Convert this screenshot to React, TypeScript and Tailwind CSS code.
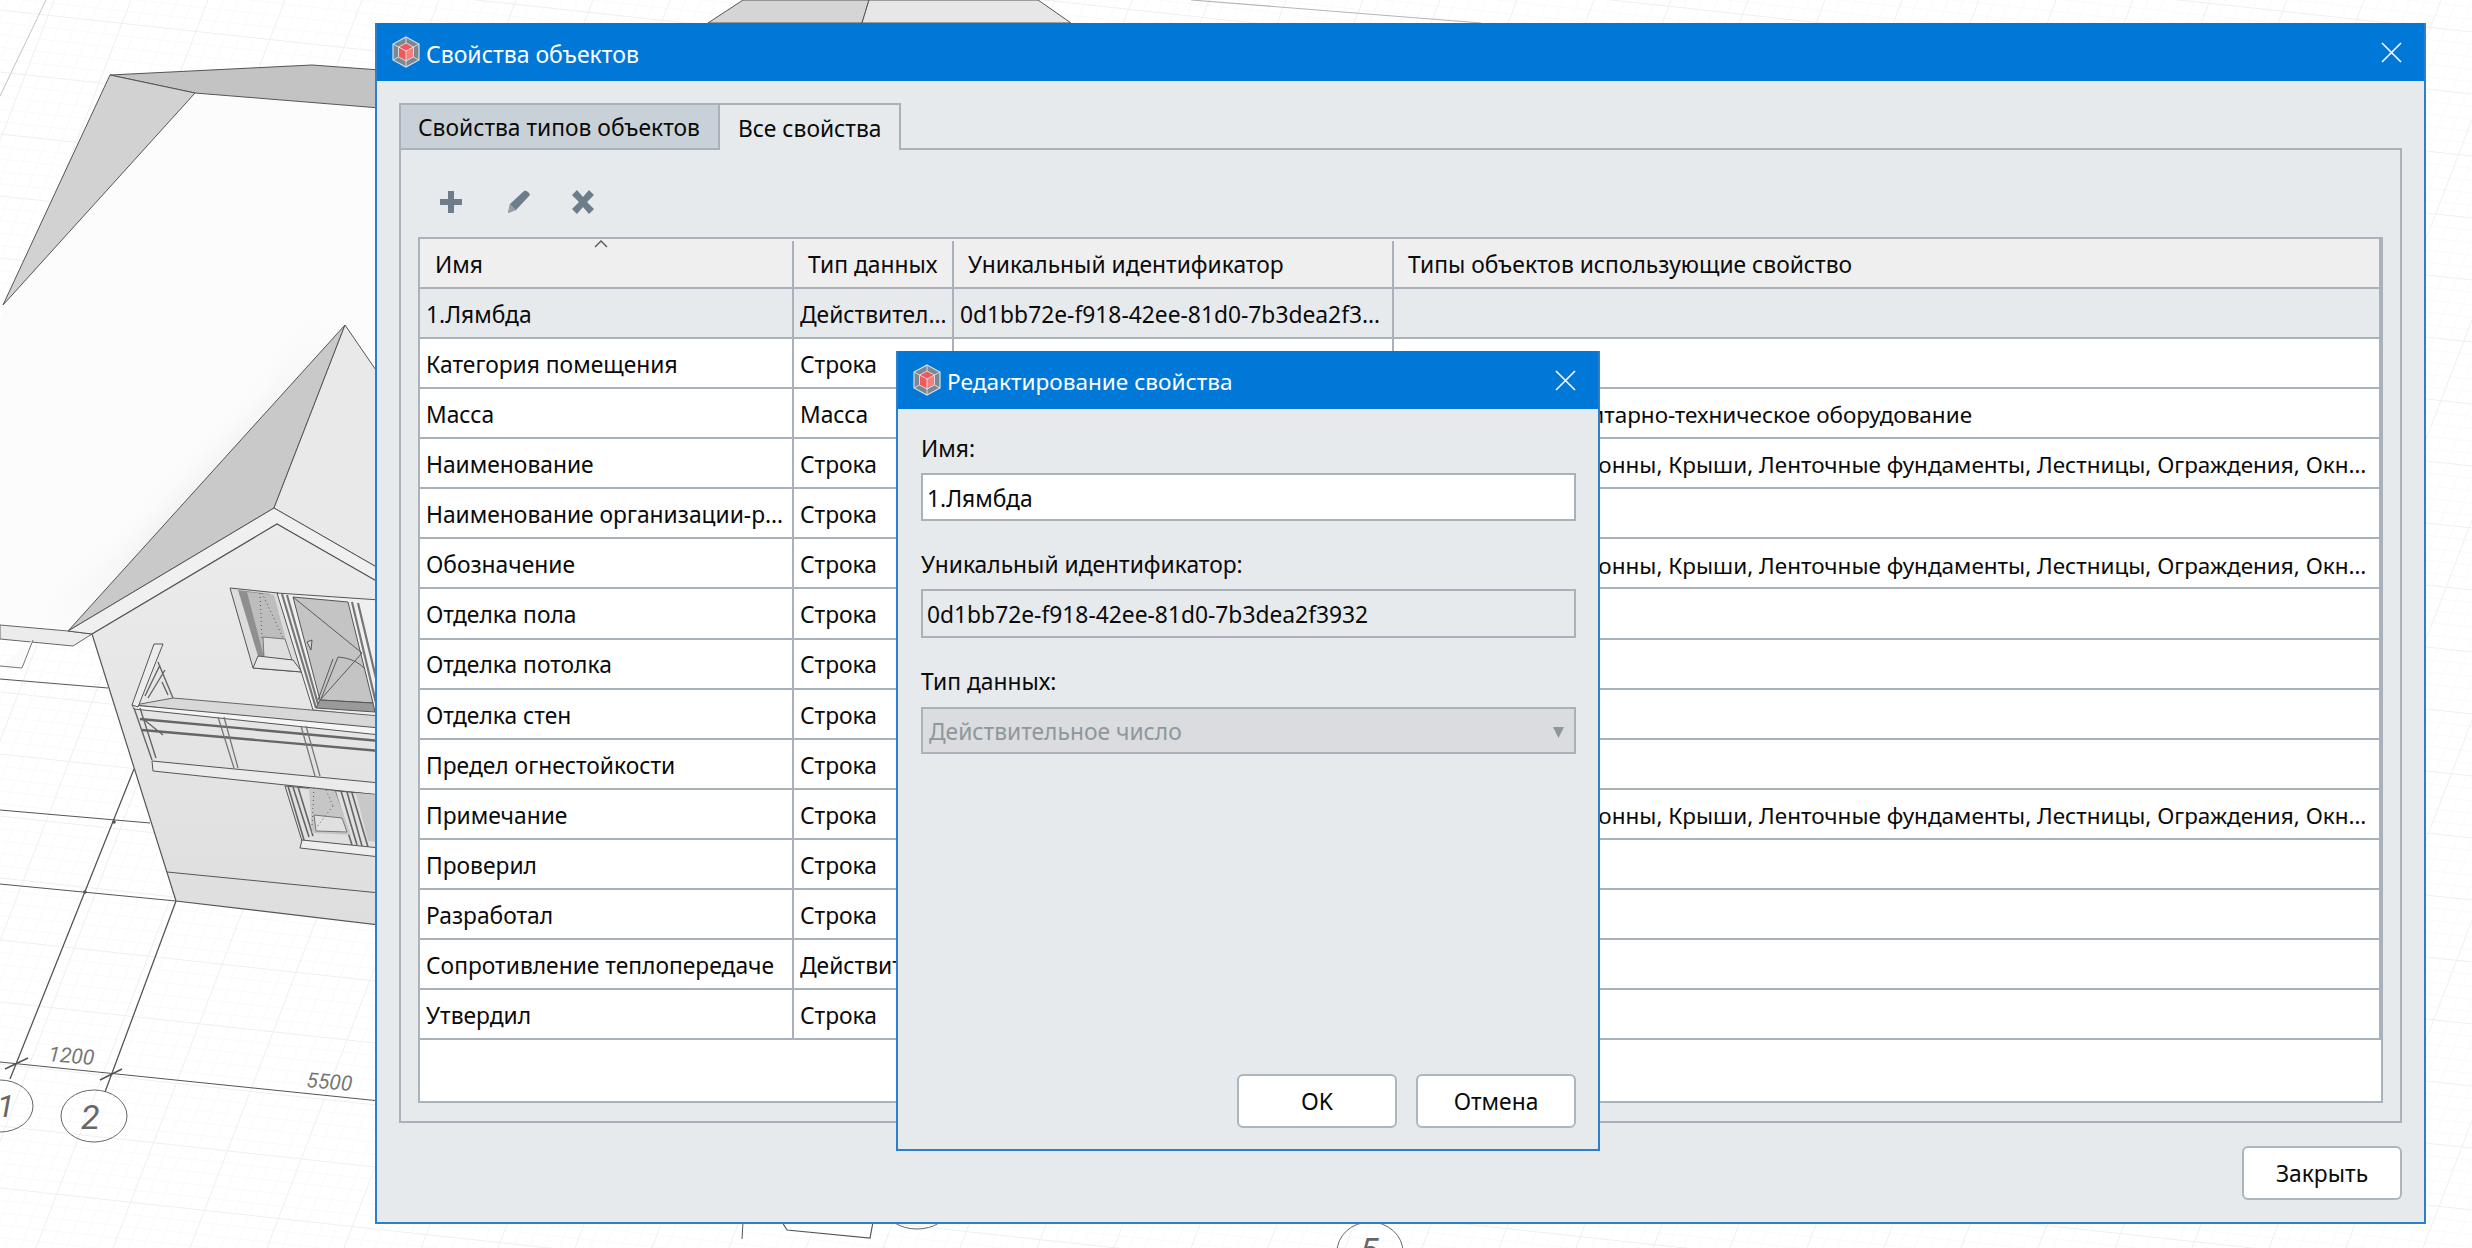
import type { FC } from "react";

type Row = { name: string; type: string; id?: string; objects?: string };

const allObjects =
	"Стены, Балки, Колонны, Крыши, Ленточные фундаменты, Лестницы, Ограждения, Окна, Двери";

const rows: Array<Row> = [
	{ name: "1.Лямбда", type: "Действительное число", id: "0d1bb72e-f918-42ee-81d0-7b3dea2f3932" },
	{ name: "Категория помещения", type: "Строка" },
	{ name: "Масса", type: "Масса", objects: "Ограждения, Санитарно-техническое оборудование" },
	{ name: "Наименование", type: "Строка", objects: allObjects },
	{ name: "Наименование организации-разработчика", type: "Строка" },
	{ name: "Обозначение", type: "Строка", objects: allObjects },
	{ name: "Отделка пола", type: "Строка" },
	{ name: "Отделка потолка", type: "Строка" },
	{ name: "Отделка стен", type: "Строка" },
	{ name: "Предел огнестойкости", type: "Строка" },
	{ name: "Примечание", type: "Строка", objects: allObjects },
	{ name: "Проверил", type: "Строка" },
	{ name: "Разработал", type: "Строка" },
	{ name: "Сопротивление теплопередаче", type: "Действительное число" },
	{ name: "Утвердил", type: "Строка" },
];

const Logo: FC = () => (
	<svg width="30" height="32" viewBox="0 0 30 32" className="shrink-0">
		<polygon points="15,1 28,8 28,24 15,31 2,24 2,8" fill="#7a8794" stroke="#d8dee3" strokeWidth="1.2" />
		<polygon points="15,7 22.5,11 22.5,21 15,25 7.5,21 7.5,11" fill="#ec5a5c" />
		<polygon points="15,15 22.5,11 22.5,21 15,25" fill="#f27f7e" />
		<path d="M15 15 L7.5 11 M15 15 L22.5 11 M15 15 V25 M15 7 L22.5 11 V21 L15 25 L7.5 21 V11 Z M15 1 V7 M2 8 L7.5 11 M28 8 L22.5 11 M2 24 L7.5 21 M28 24 L22.5 21 M15 25 V31" stroke="#dfe4e8" strokeWidth="0.9" fill="none" />
	</svg>
);

const CloseIcon: FC = () => (
	<svg width="21" height="21" viewBox="0 0 21 21">
		<path d="M1 1 L20 20 M20 1 L1 20" stroke="#ffffff" strokeWidth="1.6" fill="none" />
	</svg>
);

const DialogHeader: FC<{ title: string; size: string }> = ({ title, size }) => (
	<div className="flex h-[58px] shrink-0 items-center bg-[#0078d7] pl-[14px] pr-[22px] text-white">
		<Logo />
		<div className={`ml-[5px] flex-1 pt-[3px] leading-[30px] ${size}`}>{title}</div>
		<CloseIcon />
	</div>
);

const DialogButton: FC<{ label: string }> = ({ label }) => (
	<button className="h-[54px] w-[160px] rounded-[6px] border-2 border-[#adb5bd] bg-white pt-[2px] text-[22.8px] text-[#0a0a0a]">
		{label}
	</button>
);

const Background: FC = () => {
	const rowLines = Array.from({ length: 130 }, (_, i) => i);
	const colLines = Array.from({ length: 240 }, (_, i) => i);
	return (
		<svg className="absolute inset-0" width="2472" height="1248" viewBox="0 0 2472 1248">
			<defs>
				<filter id="soft" x="-20%" y="-20%" width="140%" height="140%">
					<feGaussianBlur stdDeviation="14" />
				</filter>
				<linearGradient id="wall" x1="0" y1="0" x2="0" y2="1">
					<stop offset="0" stopColor="#ececec" />
					<stop offset="1" stopColor="#dedede" />
				</linearGradient>
			</defs>
			{rowLines.map((i) => (
				<line
					key={`r${i}`}
					x1="0"
					y1={-300 + i * 12.4}
					x2="2472"
					y2={-300 + i * 12.4 + 270}
					stroke={i % 5 === 0 ? "#efefef" : "#fafafa"}
					strokeWidth="1"
				/>
			))}
			{colLines.map((i) => (
				<line
					key={`c${i}`}
					x1={i * 15.4 - 100}
					y1="0"
					x2={i * 15.4 - 580}
					y2="1248"
					stroke={i % 5 === 0 ? "#efefef" : "#fafafa"}
					strokeWidth="1"
				/>
			))}
			<line x1="46" y1="0" x2="0" y2="96" stroke="#c4c4c4" strokeWidth="1" />

			{/* main roof */}
			<polygon points="3,305 195,93 380,108 380,640 68,631 0,625 0,330" fill="#fcfcfc" />
			<polygon points="110,75 312,65 380,70 380,108 195,93" fill="#c3c3c3" stroke="#555" strokeWidth="1" />
			<polygon points="110,75 195,93 3,305" fill="#d2d2d2" stroke="#555" strokeWidth="1" />
			<polygon points="345,325 274,508 68,631 150,560 300,400" fill="#d0d0d0" opacity="0.28" filter="url(#soft)" transform="translate(-22 -6)" />

			{/* eaves */}
			<polygon points="0,625 68,631 92,634 73,646 0,639" fill="#ececec" stroke="#666" strokeWidth="1" />
			<polyline points="33,640 22,668 0,666" fill="#fafafa" stroke="#777" strokeWidth="1" />

			{/* gable */}
			<polygon points="345,325 274,508 68,631" fill="#c9c9c9" stroke="#555" strokeWidth="1" />
			<polygon points="345,325 380,376 380,569 274,508" fill="#e9e9e9" stroke="#555" strokeWidth="1" />
			<polygon points="274,508 380,569 380,583 277,524 92,634 68,631" fill="#f0f0f0" stroke="#555" strokeWidth="1" />
			<polygon points="277,524 380,583 380,925 176,901 92,634" fill="url(#wall)" stroke="#555" strokeWidth="1.2" />
			<line x1="167" y1="872" x2="380" y2="893" stroke="#555" strokeWidth="1" />

			{/* upper left window */}
			<polygon points="230,588 278,593 302,672 253,668" fill="#dcdcdc" stroke="#555" strokeWidth="1" />
			<polygon points="238,590 270,594 290,658 258,656" fill="#8f8f8f" />
			<polygon points="247,592 274,595 290,655 263,653" fill="#bdbdbd" />
			<polygon points="263,637 285,639 292,660 264,658" fill="#dedede" stroke="#777" strokeWidth="1" />
			<path d="M260 593 L262 640 M262 593 L284 640" stroke="#555" strokeWidth="1" strokeDasharray="1 3" fill="none" />
			<polygon points="258,656 293,660 302,672 253,668" fill="#e6e6e6" stroke="#555" strokeWidth="1" />

			{/* big window */}
			<polygon points="277,593 380,600 380,717 313,710" fill="#efefef" stroke="#555" strokeWidth="1" />
			<polygon points="293,597 348,602 373,703 320,700" fill="#c4c4c4" stroke="#555" strokeWidth="1" />
			<path d="M282 594 L316 708 M287 595 L318 704 M352 602 L376 703 M358 603 L380 695" stroke="#777" strokeWidth="2.2" fill="none" />
			<path d="M293 597 L362 653 L321 699 M338 657 L321 699 M333 659 L318 700 M338 657 C350 658 358 662 364 668" stroke="#5a5a5a" strokeWidth="1" fill="none" />
			<polygon points="320,700 373,703 375,712 316,708" fill="#9a9a9a" stroke="#555" strokeWidth="1" />
			<polygon points="307,642 312,640 311,650" fill="#d8d8d8" stroke="#555" strokeWidth="1" />

			{/* balcony */}
			<polygon points="173,698 380,716 380,732 135,705" fill="#d8d8d8" stroke="#666" strokeWidth="1" />
			<polygon points="132,705 380,728 380,735 134,709" fill="#f5f5f5" stroke="#555" strokeWidth="1" />
			<polygon points="132,705 154,644 163,644 138,707" fill="#ececec" stroke="#555" strokeWidth="1" />
			<path d="M134 708 L152 760 M140 708 L156 758 M158 662 L173 698 M162 682 L168 695 M145 696 L160 665 M148 698 L165 670 M142 718 L163 735" stroke="#666" strokeWidth="1.4" fill="none" />
			<path d="M140 719 L380 741 M142 730 L380 751" stroke="#666" strokeWidth="2.4" fill="none" />
			<path d="M218 717 L234 768 M224 717 L238 768 M301 726 L315 776 M306 726 L320 776" stroke="#777" strokeWidth="1.3" fill="none" />
			<polygon points="152,761 380,783 380,795 153,771" fill="#ebebeb" stroke="#555" strokeWidth="1" />

			{/* lower window */}
			<polygon points="285,786 380,795 380,850 302,841" fill="#e0e0e0" stroke="#555" strokeWidth="1" />
			<path d="M288 786 L304 840 M293 787 L309 837 M298 787 L313 836 M335 791 L352 845 M341 791 L357 845 M347 792 L362 846 M352 793 L368 847" stroke="#666" strokeWidth="1.6" fill="none" />
			<polygon points="309,788 335,791 351,835 312,833" fill="#c6c6c6" />
			<polygon points="314,815 342,818 347,832 316,831" fill="#e0e0e0" stroke="#777" strokeWidth="1" />
			<polygon points="356,793 380,795 380,842 368,841" fill="#c8c8c8" />
			<path d="M314 788 L312 826 M326 790 L333 806 M333 806 L316 828" stroke="#555" strokeWidth="1" strokeDasharray="1 3" fill="none" />
			<polygon points="302,840 380,848 380,857 300,848" fill="#eeeeee" stroke="#555" strokeWidth="1" />

			{/* axes and dimensions */}
			<path d="M0 679 L108 688 M0 810 L150 823 M0 884 L176 901" stroke="#555" strokeWidth="1" fill="none" />
			<path d="M134 769 L10 1079 M176 901 L105 1092" stroke="#555" strokeWidth="1.3" fill="none" />
			<line x1="0" y1="1062" x2="380" y2="1101" stroke="#555" strokeWidth="1" />
			<path d="M5 1069 L28 1058 M100 1080 L122 1069" stroke="#555" strokeWidth="1.6" fill="none" />
			<circle cx="114" cy="822" r="1.8" fill="#555" />
			<circle cx="85" cy="892" r="1.8" fill="#555" />
			<ellipse cx="0" cy="1106" rx="33" ry="26" fill="none" stroke="#666" strokeWidth="1" />
			<ellipse cx="94" cy="1116" rx="33" ry="26" fill="none" stroke="#666" strokeWidth="1" />
			<text x="-3" y="1117" fontFamily="Roboto, sans-serif" fontSize="32" fontStyle="italic" fill="#666">1</text>
			<text x="81" y="1129" fontFamily="Roboto, sans-serif" fontSize="34" fontStyle="italic" fill="#666">2</text>
			<text x="48" y="1061" fontFamily="Roboto, sans-serif" fontSize="21" fontStyle="italic" fill="#777" transform="rotate(5 48 1061)">1200</text>
			<text x="306" y="1087" fontFamily="Roboto, sans-serif" fontSize="21" fontStyle="italic" fill="#777" transform="rotate(5 306 1087)">5500</text>

			{/* parts seen round the dialog */}
			<polygon points="708,23 743,0 869,0 862,23" fill="#d5d5d5" stroke="#555" strokeWidth="1" />
			<polygon points="862,23 869,0 1038,0 1071,23" fill="#e7e7e7" stroke="#555" strokeWidth="1" />
			<line x1="1191" y1="0" x2="1481" y2="23" stroke="#b5b5b5" strokeWidth="1.2" />
			<line x1="743" y1="1222" x2="742" y2="1239" stroke="#555" strokeWidth="1" />
			<polyline points="782,1222 787,1230 870,1238 873,1222" fill="#ffffff" stroke="#555" strokeWidth="1.2" />
			<ellipse cx="917" cy="1210" rx="30" ry="19" fill="none" stroke="#666" strokeWidth="1" />
			<ellipse cx="1370" cy="1252" rx="33" ry="30" fill="none" stroke="#666" strokeWidth="1" />
			<text x="1360" y="1262" fontFamily="Roboto, sans-serif" fontSize="34" fontStyle="italic" fill="#666">5</text>
		</svg>
	);
};

export default function App() {
	return (
		<div className="relative h-[1248px] w-[2472px] overflow-hidden bg-white font-['Noto_Sans',sans-serif] text-[22.8px] text-[#0a0a0a]">
			<Background />

			<div className="relative ml-[375px] pt-[23px]">
				<div className="flex h-[1201px] w-[2051px] flex-col border-2 border-t-0 border-[#2a80cc] bg-[#e6eaed]">
					<DialogHeader title="Свойства объектов" size="text-[23px]" />

					<div className="flex flex-1 flex-col px-[22px] pb-[22px] pt-[22px]">
						<div className="relative z-10 -mb-[2px] flex h-[47px] shrink-0">
							<div className="flex w-[321px] items-center border-2 border-[#a9b2bb] bg-[#c9d1d8] pl-[17px] pt-[4px]">
								Свойства типов объектов
							</div>
							<div className="flex w-[181px] items-center border-r-2 border-t-2 border-[#a9b2bb] bg-[#e6eaed] pl-[18px] pt-[4px]">
								Все свойства
							</div>
						</div>

						<div className="flex flex-1 flex-col border-2 border-[#a9b2bb] px-[17px] pb-[18px]">
							<div className="flex h-[87px] shrink-0 items-center pl-[22px] pt-[16px]">
								<svg width="22" height="22" viewBox="0 0 22 22">
									<path d="M8 0 H14 V8 H22 V14 H14 V22 H8 V14 H0 V8 H8 Z" fill="#6d7d8b" />
								</svg>
								<svg className="ml-[45px]" width="24" height="24" viewBox="0 0 24 24">
									<path d="M1 23 L3 14 L17 1 C19 0 22 2 23 5 L9 20 Z" fill="#6d7d8b" />
									<path d="M1 23 L3 14 L9 20 Z" fill="#94a1ac" />
								</svg>
								<svg className="ml-[41px]" width="22" height="24" viewBox="0 0 22 24">
									<path d="M0 5 L5 0 L11 7 L17 0 L22 5 L15 12 L22 19 L17 24 L11 17 L5 24 L0 19 L7 12 Z" fill="#6d7d8b" />
								</svg>
							</div>

							<div className="flex flex-1 flex-col border-2 border-[#a9b2bb] bg-white">
								<div className="flex h-[50px] shrink-0 items-center border-b-2 border-r-2 border-[#a9b2bb] bg-[#efefef] pt-[3px]">
									<div className="relative flex h-[47px] w-[374px] items-center border-r-2 border-[#a9b2bb] pl-[15px] pt-[1px]">
										Имя
										<svg className="absolute left-[174px] top-[-1px]" width="14" height="8" viewBox="0 0 14 8">
											<path d="M1 7 L7 1 L13 7" stroke="#555" strokeWidth="1.4" fill="none" />
										</svg>
									</div>
									<div className="flex h-[47px] w-[160px] items-center border-r-2 border-[#a9b2bb] pl-[14px] pt-[1px]">
										Тип данных
									</div>
									<div className="flex h-[47px] w-[440px] items-center border-r-2 border-[#a9b2bb] pl-[14px] pt-[1px]">
										Уникальный идентификатор
									</div>
									<div className="flex-1 pl-[14px] pt-[1px]">Типы объектов использующие свойство</div>
								</div>

								{rows.map((row, index) => (
									<div
										key={row.name}
										className={
											index === 0
												? "flex h-[50.08px] shrink-0 border-b-2 border-r-2 border-[#a9b2bb] bg-[#e6eaed]"
												: "flex h-[50.08px] shrink-0 border-b-2 border-r-2 border-[#a9b2bb]"
										}
									>
										<div className="flex w-[374px] items-center overflow-hidden border-r-2 border-[#a9b2bb] pl-[6px] pr-[6px] pt-[4px]">
											<span className="truncate">{row.name}</span>
										</div>
										<div className="flex w-[160px] items-center overflow-hidden border-r-2 border-[#a9b2bb] pl-[6px] pr-[4px] pt-[4px]">
											<span className="truncate">{row.type}</span>
										</div>
										<div className="flex w-[440px] items-center overflow-hidden border-r-2 border-[#a9b2bb] pl-[6px] pr-[4px] pt-[4px]">
											<span className="truncate">{row.id}</span>
										</div>
										<div className="flex min-w-0 flex-1 items-center pl-[7px] pr-[6px] pt-[4px] text-[22.5px]">
											<span className="truncate">{row.objects}</span>
										</div>
									</div>
								))}
							</div>
						</div>

						<div className="mt-[23px] flex shrink-0 justify-end">
							<button className="h-[54px] w-[160px] rounded-[6px] border-2 border-[#adb5bd] bg-white pt-[2px] text-[22.8px] text-[#0a0a0a]">
								Закрыть
							</button>
						</div>
					</div>
				</div>
			</div>

			<div className="absolute left-[896px] top-[351px] z-20 flex h-[800px] w-[704px] flex-col border-2 border-t-0 border-[#2a80cc] bg-[#e6eaed]">
				<DialogHeader title="Редактирование свойства" size="text-[22.6px]" />
				<div className="flex flex-1 flex-col pb-[21px] pl-[23px] pr-[22px] pt-[25px]">
					<div className="leading-[30px]">Имя:</div>
					<div className="mt-[9px] flex h-[48px] items-center border-2 border-[#a9b2bb] bg-white pl-[4px] pt-[4px]">1.Лямбда</div>
					<div className="mt-[29px] leading-[30px]">Уникальный идентификатор:</div>
					<div className="mt-[9px] flex h-[49px] items-center border-2 border-[#a9b2bb] pl-[4px] pt-[4px]">
						0d1bb72e-f918-42ee-81d0-7b3dea2f3932
					</div>
					<div className="mt-[29px] leading-[30px]">Тип данных:</div>
					<div className="mt-[10px] flex h-[47px] items-center justify-between border-2 border-[#a9b2bb] bg-[#dadcdf] pl-[6px] pr-[10px] pt-[4px] text-[#8f979e]">
						Действительное число
						<svg width="11" height="11" viewBox="0 0 11 11">
							<polygon points="0,0 11,0 5.5,11" fill="#8f979e" />
						</svg>
					</div>
					<div className="mt-auto flex justify-end gap-[19px]">
						<DialogButton label="OK" />
						<DialogButton label="Отмена" />
					</div>
				</div>
			</div>
		</div>
	);
}
